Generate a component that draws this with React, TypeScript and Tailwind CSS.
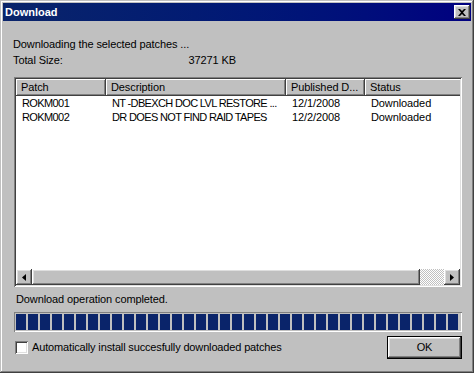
const raised = 'shadow-[inset_-1px_-1px_#404040,inset_1px_1px_#ffffff,inset_-2px_-2px_#808080,inset_2px_2px_#dfdfdf]';
const sunken = 'shadow-[inset_1px_1px_#808080,inset_-1px_-1px_#ffffff,inset_2px_2px_#404040,inset_-2px_-2px_#dfdfdf]';

const columns = [
    { label: 'Patch', width: 'w-[90px]', cell: 'tracking-[-0.6px]' },
    { label: 'Description', width: 'w-[180px]', cell: 'tracking-[-0.65px]' },
    { label: 'Published D...', width: 'w-[79px]', cell: '' },
    { label: 'Status', width: 'w-[110px]', cell: '' },
];

const rows = [
    ['ROKM001', 'NT -DBEXCH DOC LVL RESTORE ...', '12/1/2008', 'Downloaded'],
    ['ROKM002', 'DR DOES NOT FIND RAID TAPES', '12/2/2008', 'Downloaded'],
];

function Arrow({ dir }: { dir: 'left' | 'right' }) {
    return (
        <svg width="4" height="7" viewBox="0 0 4 7">
            {dir === 'left' ? <path d="M4 0 L4 7 L0 3.5 Z" fill="#000" /> : <path d="M0 0 L0 7 L4 3.5 Z" fill="#000" />}
        </svg>
    );
}

export default function App() {
    return (
        <div
            className="w-[474px] h-[373px] bg-[#c0c0c0] text-[11px] leading-[13px] tracking-[-0.1px] text-black shadow-[inset_-1px_-1px_#404040,inset_1px_1px_#c0c0c0,inset_-2px_-2px_#808080,inset_2px_2px_#ffffff] p-[3px] flex flex-col"
            style={{ fontFamily: '"Liberation Sans", Arial, sans-serif' }}
        >
            {/* Title bar */}
            <div className="h-[18px] flex items-center justify-between bg-gradient-to-r from-[#0a246a] to-[#000080] pl-[2px] pr-[1px]">
                <span className="text-white font-bold tracking-normal">Download</span>
                <div className={`w-[16px] h-[14px] bg-[#c0c0c0] flex items-center justify-center ${raised}`}>
                    <svg width="8" height="7" viewBox="0 0 8 7">
                        <path d="M0 0h2l2 2 2-2h2L5 3.5 8 7H6L4 5 2 7H0l3-3.5z" fill="#000" />
                    </svg>
                </div>
            </div>

            {/* Body */}
            <div className="flex-1 flex flex-col pl-[10px] pr-[9px]">
                <div className="mt-[17px] h-[13px] whitespace-nowrap">Downloading the selected patches ...</div>
                <div className="mt-[3px] h-[13px] flex whitespace-nowrap">
                    <span className="w-[170px]">Total Size:</span>
                    <span className="w-[53px] text-right">37271 KB</span>
                </div>

                {/* List view */}
                <div className={`mt-[10px] ml-px h-[210px] bg-white p-[2px] flex flex-col ${sunken}`}>
                    <div className="h-[17px] flex overflow-hidden bg-[#c0c0c0] shrink-0">
                        {columns.map((c, i) => (
                            <div
                                key={i}
                                className={`${c.width} shrink-0 flex items-center pl-[5px] whitespace-nowrap shadow-[inset_-1px_-1px_#404040,inset_1px_1px_#ffffff,inset_-2px_-2px_#808080]`}
                            >
                                {c.label}
                            </div>
                        ))}
                    </div>
                    <div className="flex-1 overflow-hidden">
                        {rows.map((r, i) => (
                            <div key={i} className="h-[14px] flex items-center whitespace-nowrap">
                                {r.map((cell, j) => (
                                    <div key={j} className={`${columns[j].width} ${columns[j].cell} shrink-0 pl-[6px] overflow-hidden`}>
                                        {cell}
                                    </div>
                                ))}
                            </div>
                        ))}
                    </div>
                    {/* Horizontal scrollbar */}
                    <div className="h-[16px] flex shrink-0">
                        <div className={`w-[16px] bg-[#c0c0c0] flex items-center justify-center ${raised}`}>
                            <Arrow dir="left" />
                        </div>
                        <div className={`w-[388px] bg-[#c0c0c0] ${raised}`} />
                        <div className="flex-1 bg-[repeating-conic-gradient(#c0c0c0_0_25%,#ffffff_0_50%)] bg-[length:2px_2px]" />
                        <div className={`w-[16px] bg-[#c0c0c0] flex items-center justify-center ${raised}`}>
                            <Arrow dir="right" />
                        </div>
                    </div>
                </div>

                <div className="mt-[6px] ml-[3px] h-[13px] whitespace-nowrap">Download operation completed.</div>

                {/* Progress bar */}
                <div className="mt-[6px] ml-px h-[20px] p-[2px] flex gap-[2px] overflow-hidden shadow-[inset_1px_1px_#808080,inset_-1px_-1px_#ffffff]">
                    {Array.from({ length: 37 }).map((_, i) => (
                        <div key={i} className="w-[10px] h-full bg-[#0a246a] shrink-0" />
                    ))}
                </div>

                <div className="mt-[4px] h-[23px] flex items-center justify-between">
                    <div className="flex items-center ml-[2px] whitespace-nowrap">
                        <div className={`w-[13px] h-[13px] bg-white ${sunken}`} />
                        <span className="ml-[4px] tracking-[-0.15px]">Automatically install succesfully downloaded patches</span>
                    </div>
                    <div className="w-[75px] h-[23px] border border-black">
                        <div className={`w-full h-full flex items-center justify-center ${raised}`}>OK</div>
                    </div>
                </div>
            </div>
        </div>
    );
}
